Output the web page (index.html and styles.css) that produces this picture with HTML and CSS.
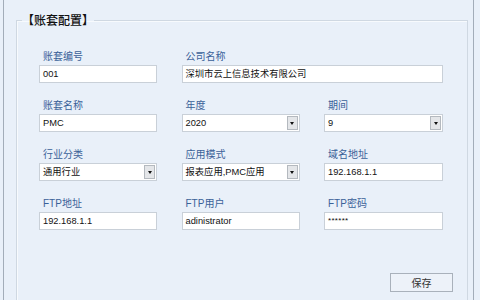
FILE: index.html
```html
<!DOCTYPE html>
<html lang="zh-CN">
<head>
<meta charset="utf-8">
<title>账套配置</title>
<link rel="stylesheet" href="styles.css">
</head>
<body>
<div class="window">
  <fieldset class="group">
    <legend class="group-title">【账套配置】</legend>
    <div class="group-body">
      <div class="grid">
        <div class="field">
          <label class="lbl">账套编号</label>
          <div class="input">001</div>
        </div>
        <div class="field span2">
          <label class="lbl">公司名称</label>
          <div class="input">深圳市云上信息技术有限公司</div>
        </div>

        <div class="field">
          <label class="lbl">账套名称</label>
          <div class="input">PMC</div>
        </div>
        <div class="field">
          <label class="lbl">年度</label>
          <div class="input select"><span class="val">2020</span><span class="btn"><span class="arrow"></span></span></div>
        </div>
        <div class="field">
          <label class="lbl">期间</label>
          <div class="input select"><span class="val">9</span><span class="btn"><span class="arrow"></span></span></div>
        </div>

        <div class="field">
          <label class="lbl">行业分类</label>
          <div class="input select"><span class="val">通用行业</span><span class="btn"><span class="arrow"></span></span></div>
        </div>
        <div class="field">
          <label class="lbl">应用模式</label>
          <div class="input select"><span class="val">报表应用,PMC应用</span><span class="btn"><span class="arrow"></span></span></div>
        </div>
        <div class="field">
          <label class="lbl">域名地址</label>
          <div class="input">192.168.1.1</div>
        </div>

        <div class="field">
          <label class="lbl">FTP地址</label>
          <div class="input">192.168.1.1</div>
        </div>
        <div class="field">
          <label class="lbl">FTP用户</label>
          <div class="input">adinistrator</div>
        </div>
        <div class="field">
          <label class="lbl">FTP密码</label>
          <div class="input pwd">******</div>
        </div>
      </div>
      <div class="actions">
        <button class="save" type="button">保存</button>
      </div>
    </div>
  </fieldset>
</div>
</body>
</html>
```

FILE: styles.css
```css
html, body {
  margin: 0;
  padding: 0;
  background: #e9f0f9;
  width: 480px;
  height: 300px;
  overflow: hidden;
  font-family: "Liberation Sans", "Noto Sans CJK SC", sans-serif;
}

.window {
  box-sizing: border-box;
  margin-left: 3px;
  width: 471px;
  height: 300px;
  overflow: hidden;
  border-left: 1px solid #a3adb9;
  border-right: 1px solid #a3adb9;
  background: #e9f0f9;
  padding-top: 13px;
}

.group {
  box-sizing: border-box;
  margin: 0 0 0 12px;
  padding: 0;
  width: 452px;
  height: 287px;
  border: 1px solid #cfd8e2;
  border-bottom: none;
  box-shadow: inset 1px 1px 0 #f7fafd;
}

.group-title {
  margin-left: 5px;
  padding: 0;
  font-family: "Noto Sans CJK SC", sans-serif;
  font-size: 12px;
  line-height: 14px;
  color: #111;
  font-weight: 500;
}

.group-body {
  padding: 24px 14px 0 22px;
}

.grid {
  display: grid;
  grid-template-columns: 118px 118px 119px;
  column-gap: 24.5px;
  row-gap: 17px;
}

.field {
  display: flex;
  flex-direction: column;
}

.span2 {
  grid-column: span 2;
}

.lbl {
  display: block;
  margin: 0 0 2px 4px;
  height: 12px;
  font-size: 10px;
  line-height: 12px;
  color: #3a6198;
}

.input {
  box-sizing: border-box;
  height: 18px;
  background: #fff;
  border: 1px solid #c9d0d8;
  padding: 0 3px;
  font-size: 9.3px;
  line-height: 16px;
  color: #111;
  white-space: nowrap;
  overflow: hidden;
}

.select {
  display: flex;
  padding-right: 1px;
}

.select .val {
  flex: 1;
}

.select .btn {
  box-sizing: border-box;
  width: 11px;
  height: 14px;
  margin-top: 1px;
  background: #e4e6e9;
  border: 1px solid #b4b9bf;
  display: flex;
  align-items: center;
  justify-content: center;
}

.arrow {
  width: 0;
  height: 0;
  border-left: 2.5px solid transparent;
  border-right: 2.5px solid transparent;
  border-top: 3px solid #111;
}

.pwd {
  font-size: 8px;
  letter-spacing: 0.3px;
  line-height: 15px;
}

.actions {
  display: flex;
  justify-content: flex-end;
  margin-top: 43px;
}

.save {
  box-sizing: border-box;
  width: 63px;
  height: 19px;
  padding: 0;
  background: #edf2f9;
  border: 1px solid #a9b1bb;
  border-radius: 0;
  font-family: "Noto Sans CJK SC", sans-serif;
  font-size: 10px;
  line-height: 17px;
  color: #333;
}
```
